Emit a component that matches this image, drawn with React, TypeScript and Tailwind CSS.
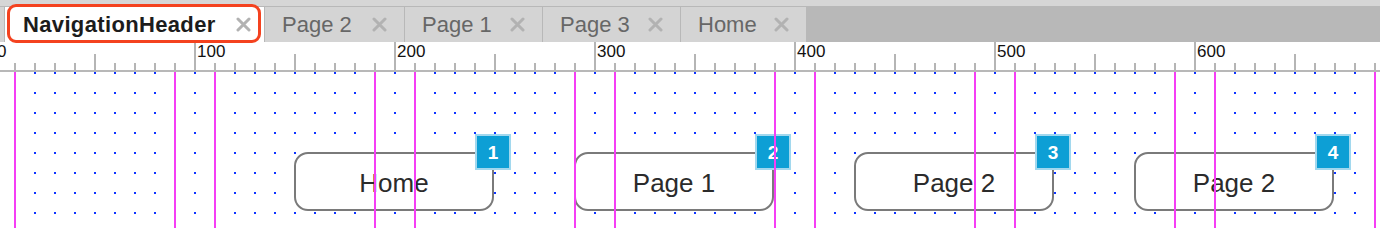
import React from 'react'

const tabs = [
  { label: 'Page 2', width: 139 },
  { label: 'Page 1', width: 137 },
  { label: 'Page 3', width: 137 },
  { label: 'Home', width: 125 },
]

const buttons = [
  { label: 'Home', badge: 1 },
  { label: 'Page 1', badge: 2 },
  { label: 'Page 2', badge: 3 },
  { label: 'Page 2', badge: 4 },
]

const rulerLabels = [0, 100, 200, 300, 400, 500, 600]

function CloseIcon() {
  return (
    <svg width="15" height="15" viewBox="0 0 15 15" className="shrink-0">
      <path d="M2 2 L13 13 M13 2 L2 13" stroke="#b2b2b2" strokeWidth="3" strokeLinecap="round" />
    </svg>
  )
}

function Ruler() {
  // 10 units = 20px, zero sits at x = -5
  const ticks: { x: number; kind: 'major' | 'mid' | 'minor' }[] = []
  for (let k = -1; k < 70; k++) {
    const x = 15 + k * 20
    const unit = (x + 5) / 2
    const kind = unit % 100 === 0 ? 'major' : unit % 50 === 0 ? 'mid' : 'minor'
    ticks.push({ x, kind })
  }
  return (
    <div className="relative h-[30px] bg-white">
      <svg width="1380" height="30" className="absolute left-0 top-0">
        {ticks.map((t) => (
          <rect
            key={t.x}
            x={t.x - 1}
            y={t.kind === 'major' ? 0 : t.kind === 'mid' ? 12 : 21}
            width="2"
            height={t.kind === 'major' ? 28 : t.kind === 'mid' ? 16 : 7}
            fill="#b5b5b5"
          />
        ))}
        <rect x="0" y="28" width="1380" height="2" fill="#b8b8b8" />
      </svg>
      {rulerLabels.map((n) => (
        <span
          key={n}
          className="absolute top-px text-[17px] leading-none text-[#111]"
          style={{ left: n * 2 - 3 }}
        >
          {n}
        </span>
      ))}
    </div>
  )
}

function Guides() {
  const xs: number[] = []
  for (let m = 0; m < 7; m++) xs.push(15 + m * 200, 175 + m * 200)
  return (
    <svg width="1380" height="156" className="pointer-events-none absolute left-0 top-0">
      {xs.map((x) => (
        <rect key={x} x={x - 1} y="0" width="2" height="156" fill="#f53ef5" />
      ))}
    </svg>
  )
}

export default function App() {
  return (
    <div className="relative w-[1380px] h-[228px] overflow-hidden bg-white font-['Liberation_Sans',Arial,sans-serif]">
      <div className="h-[6px] bg-[#d6d6d6]" />

      <div className="flex h-[36px] gap-px bg-[#b8b8b8] pt-px">
        <div className="w-[4px] bg-[#d4d4d4]" />
        <div className="flex w-[259px] items-center justify-between bg-white pl-[18px] pr-[13px]">
          <span className="text-[22px] font-bold tracking-[0.35px] text-[#1c1c1c]">NavigationHeader</span>
          <CloseIcon />
        </div>
        {tabs.map((t) => (
          <div
            key={t.label}
            className="flex items-center justify-between bg-[#d4d4d4] pl-[17px] pr-[17px]"
            style={{ width: t.width }}
          >
            <span className="text-[22px] text-[#676767]">{t.label}</span>
            <CloseIcon />
          </div>
        ))}
      </div>

      <Ruler />

      <div className="relative h-[156px]">
        <svg width="1380" height="156" className="absolute left-0 top-0">
          <defs>
            <pattern id="dots" x="14" y="0" width="20" height="20" patternUnits="userSpaceOnUse">
              <rect width="2" height="2" fill="#0f34ff" />
            </pattern>
          </defs>
          <rect width="1380" height="156" fill="url(#dots)" />
        </svg>

        <div className="relative flex gap-[80px] pl-[294px] pt-[80px]">
          {buttons.map((b) => (
            <div
              key={b.badge}
              className="relative flex h-[59px] w-[200px] items-center justify-center rounded-[14px] border-2 border-[#7a7a7a] bg-white pt-[3px]"
            >
              <span className="text-[26px] text-[#2b2b2b]">{b.label}</span>
              <div className="absolute -right-[19px] -top-[20px] flex h-[36px] w-[36px] items-center justify-center border-2 border-[#a2d8ee] bg-[#0d9fd5]">
                <span className="text-[19px] font-bold leading-none text-white">{b.badge}</span>
              </div>
            </div>
          ))}
        </div>

        <Guides />
      </div>

      <div className="pointer-events-none absolute left-[7px] top-[4px] h-[39px] w-[254px] rounded-[9px] border-[3px] border-[#f4421f]" />
    </div>
  )
}
